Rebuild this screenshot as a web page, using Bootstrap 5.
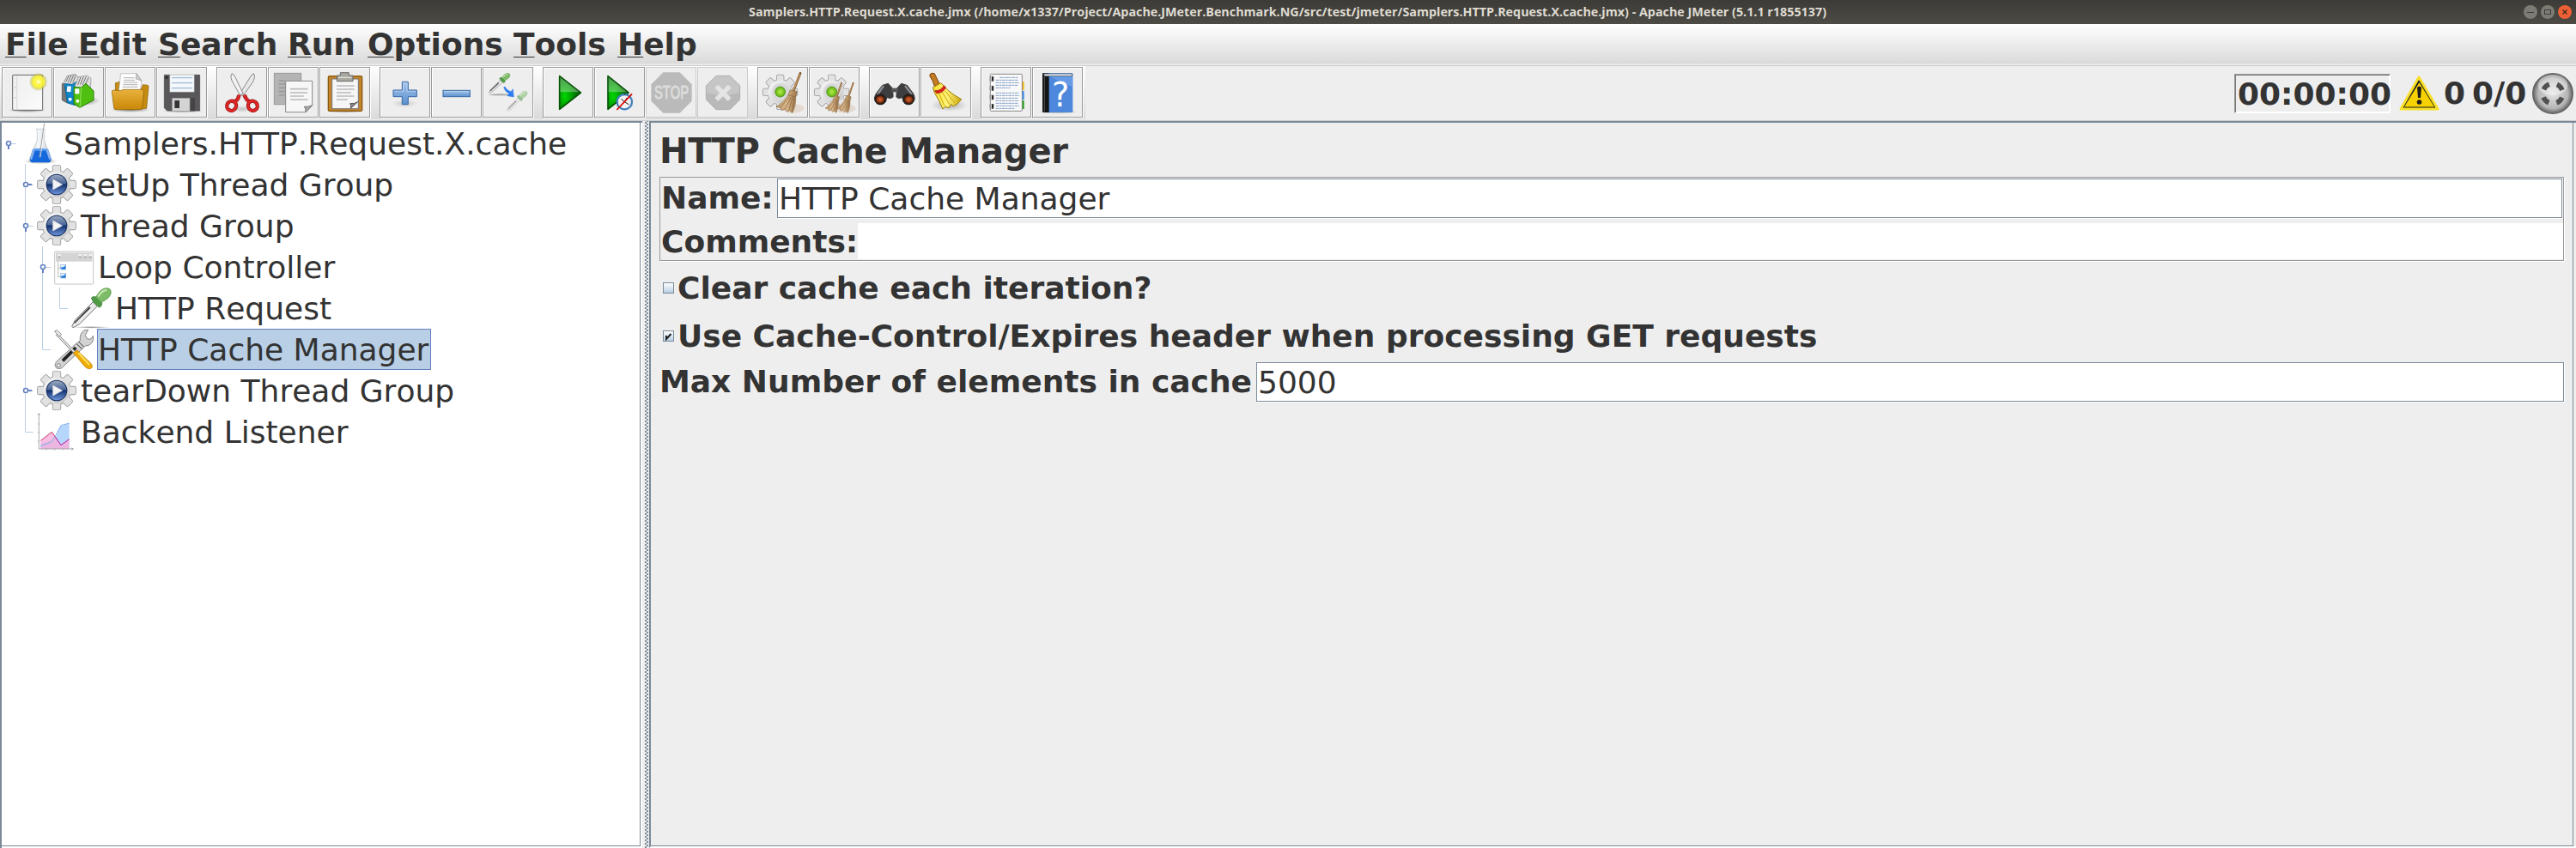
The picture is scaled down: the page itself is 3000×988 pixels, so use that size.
<!DOCTYPE html>
<html lang="en">
<head>
<meta charset="utf-8">
<title>Apache JMeter</title>
<link rel="stylesheet" href="https://cdn.jsdelivr.net/npm/bootstrap@5.3.0/dist/css/bootstrap.min.css">
<script src="https://cdn.jsdelivr.net/npm/bootstrap@5.3.0/dist/js/bootstrap.bundle.min.js"></script>
<style>
body{font-family:"DejaVu Sans",sans-serif;font-size:36px;line-height:48px;color:#333;background:#eee;overflow:hidden;height:988px;font-kerning:none}
.titlebar{height:28px;background:linear-gradient(#3c3b37,#4d4b44);color:#dfdbd2;position:relative}
.titlebar .cap{font:700 13.5px/28px "Open Sans",sans-serif;white-space:nowrap;width:1258px;margin-left:871px}
.winbtns{position:absolute;right:5px;top:6px;gap:4px}
.winbtns svg{display:block}
.menubar{height:49px;background:linear-gradient(#fff,#dadada 46px,#eee 47px,#eee 48px,#ccc 48px);font-weight:700;padding-left:6px}
.menubar a{color:#333;text-decoration:none;line-height:46px;padding-top:1px;white-space:nowrap;height:49px}
.menubar u{text-decoration-thickness:1px;text-underline-offset:2px;text-decoration-skip-ink:none}
.toolrow{height:64px;border-bottom:1px solid #ccc}
.tools{width:1264px;height:62px;background:linear-gradient(#fff,#dadada);padding:1px 0 0 2px;gap:1px}
.tb{width:59px;height:59px;padding:0;border:1px solid #999;border-radius:0;background:#eee;box-shadow:inset 1px 1px #fff,1px 1px #fff;display:block;flex:none}
.tb svg{display:block;margin:-1px}
.tb.off{border-color:#ccc;box-shadow:none}
.gap10{margin-right:10px}
.status{font-weight:700;height:63px}
.timer{width:182px;height:46px;line-height:46px;border:1px solid;border-color:#999 #fff #fff #999;box-shadow:inset 1px 1px #777,inset -1px -1px #fff;padding-left:3px;margin-top:9px;white-space:nowrap;letter-spacing:-.4px}
.tree{width:748px;height:847px;border:2px solid #7a8a99;border-right:0;border-bottom:0;background:#fff;position:relative}
.tree .frame{position:absolute;left:0;top:0;width:744px;height:843px;border-right:1px solid #7a8a99;border-bottom:1px solid #7a8a99}
.tree .lines{position:absolute;left:-2px;top:0}
.node{height:48px;white-space:nowrap}
.node .ic{width:48px;height:48px;flex:none;overflow:visible}
.node span{padding-left:3px;height:48px;line-height:49px}
.l0{padding-left:21px}.l1{padding-left:41px}.l2{padding-left:61px}.l3{padding-left:81px}
.node .sel{background:#b8cfe5;border:1px solid #6382bf;padding:0;margin-left:2px;width:389px;line-height:47px}
.divider{width:8px;background-color:#eee;background-image:radial-gradient(circle at 1px 1px,#7a8a99 .8px,transparent .9px),radial-gradient(circle at 1px 1px,#7a8a99 .8px,transparent .9px);background-size:8px 4px;background-position:3px 1px,5px 3px}
.panel{width:2244px;height:847px;border-left:2px solid #7a8a99;border-top:2px solid #7a8a99;border-bottom:2px solid #fff;position:relative;box-shadow:inset -3px 0 #eee,inset -4px 0 #7a8a99,inset 0 -1px #7a8a99;padding:0 14px 0 10px;white-space:nowrap}
.head{font-size:40px;font-weight:700;height:63px;line-height:67px;letter-spacing:-.15px}
.group{height:98px;border:1px solid #999;box-shadow:1px 1px #fff;font-weight:700;padding:1px}
.fld{background:#fff;border:1px solid #7a8a99;box-shadow:1px 1px #fff;height:46px;line-height:46px;font-weight:400;padding-left:1px;flex:1}
.lab{line-height:46px}
.opt{font-weight:700;height:56px}
.box{width:13px;height:13px;border:1px solid #7a8a99;background:linear-gradient(#fff,#b8cfe5);margin:0 4px 0 4px;flex:none}
.box svg{display:block}
</style>
</head>
<body>
<svg width="0" height="0" class="position-absolute">
<defs>
<linearGradient id="metal" x1="0" y1="0" x2="1" y2="1"><stop offset="0" stop-color="#fafafa"/><stop offset="1" stop-color="#c4c4c4"/></linearGradient>
<linearGradient id="page" x1="0" y1="0" x2="1" y2="1"><stop offset="0" stop-color="#eee"/><stop offset="1" stop-color="#fbfbfb"/></linearGradient>
<radialGradient id="glow"><stop offset="0" stop-color="#fffff0"/><stop offset=".3" stop-color="#fdf84a"/><stop offset=".65" stop-color="#f4ec30" stop-opacity=".9"/><stop offset="1" stop-color="#888830" stop-opacity="0"/></radialGradient>
<linearGradient id="gold" x1="0" y1="0" x2="0" y2="1"><stop offset="0" stop-color="#e9b23e"/><stop offset="1" stop-color="#c98706"/></linearGradient>
<radialGradient id="playg" cx=".25" cy=".6" r=".7"><stop offset="0" stop-color="#00d800"/><stop offset="1" stop-color="#005800"/></radialGradient>
<linearGradient id="blue" x1="0" y1="0" x2="0" y2="1"><stop offset="0" stop-color="#a8c6ea"/><stop offset="1" stop-color="#5b90cf"/></linearGradient>
<radialGradient id="orb"><stop offset="0" stop-color="#b5f04a"/><stop offset="1" stop-color="#5cb010"/></radialGradient>
<radialGradient id="lens"><stop offset="0" stop-color="#d9683a"/><stop offset=".6" stop-color="#963a12"/><stop offset="1" stop-color="#2a1208"/></radialGradient>
<linearGradient id="straw" x1="0" y1="0" x2="1" y2="0"><stop offset="0" stop-color="#c09a6c"/><stop offset=".5" stop-color="#d9b88c"/><stop offset="1" stop-color="#9b7448"/></linearGradient>
<linearGradient id="yel" x1="0" y1="0" x2="1" y2="0"><stop offset="0" stop-color="#f7e030"/><stop offset=".5" stop-color="#fff27a"/><stop offset="1" stop-color="#c9a608"/></linearGradient>
<linearGradient id="navy" x1="0" y1="0" x2="0" y2="1"><stop offset="0" stop-color="#9aa7bf"/><stop offset=".45" stop-color="#4a6698"/><stop offset=".5" stop-color="#12306a"/><stop offset="1" stop-color="#6d95dc"/></linearGradient>
<radialGradient id="shade"><stop offset="0" stop-color="#000" stop-opacity=".45"/><stop offset="1" stop-color="#000" stop-opacity="0"/></radialGradient>
<radialGradient id="ball" cx=".5" cy=".5"><stop offset="0" stop-color="#e4e4e4"/><stop offset=".75" stop-color="#b5b5b5"/><stop offset="1" stop-color="#606060"/></radialGradient>
<linearGradient id="glass" x1="0" y1="0" x2="1" y2="0"><stop offset="0" stop-color="#c3cad1"/><stop offset=".4" stop-color="#f6f8fa"/><stop offset="1" stop-color="#c9d0d6"/></linearGradient>
<g id="teeth"><circle r="48"/><rect x="-13" y="-66" width="26" height="132" rx="4"/><rect x="-13" y="-66" width="26" height="132" rx="4" transform="rotate(45)"/><rect x="-13" y="-66" width="26" height="132" rx="4" transform="rotate(90)"/><rect x="-13" y="-66" width="26" height="132" rx="4" transform="rotate(135)"/></g>
<g id="gear"><use href="#teeth" fill="#999" stroke="#999" stroke-width="5"/><use href="#teeth" fill="#e2e2e2"/><circle r="46" fill="url(#metal)"/></g>
<g id="besom"><path d="M150 22 L126 85" stroke="#7a5128" stroke-width="8" stroke-linecap="round"/><path d="M149 24 L126 83" stroke="#c99a62" stroke-width="4"/><path d="M115 80 L139 86 L134 105 C134 130 130 145 122 161 L112 152 L104 157 L97 147 L85 152 L82 143 L66 139 C90 125 100 110 107 98Z" fill="url(#straw)" stroke="#8b673e" stroke-width="2"/><path d="M108 98 L134 105 M112 104 L80 142 M118 106 L96 147 M124 106 L110 152 M130 108 L121 155" stroke="#7d552e" stroke-width="2" fill="none"/></g>
<g id="dropper"><path d="M4 136 L16 113 L78 50 L93 65 L31 128 L8 140Z" fill="#e8e8e8" stroke="#777" stroke-width="3"/><path d="M14 126 L68 70" stroke="#444" stroke-width="9"/><path d="M12 131 L72 73" stroke="#fff" stroke-width="4"/><path d="M72 36 C82 28 90 33 95 38 L107 50 C112 57 108 64 101 70 Q95 67 85 57 T72 36Z" fill="#4f9a45" stroke="#387532" stroke-width="2"/><path d="M88 34 C100 10 112 2 127 2 C140 2 144 15 138 27 C130 42 115 46 107 53Z" fill="#7dbb68" stroke="#4c8c40" stroke-width="2"/><path d="M96 32 C104 18 114 9 126 9" stroke="#bfe3a8" stroke-width="7" fill="none"/></g>
<g id="pin"><circle r="2.500" fill="#fff" stroke="#6382bf" stroke-width="1.600"/><path d="M3 0H7" stroke="#6382bf" stroke-width="2"/></g>
<g id="playgear"><g transform="translate(75 72)"><use href="#gear"/><circle r="37" fill="#162f62"/><circle r="34" fill="url(#navy)"/><path d="M-13 -18 L20 0 L-13 18Z" fill="#f4f4f4" stroke="#d8d8e0" stroke-width="2"/></g></g>
</defs>
</svg>

<header class="titlebar">
  <div class="cap"><svg class="d-block" width="1258" height="28"><text x="1" y="19" textLength="1255" lengthAdjust="spacingAndGlyphs" fill="#dfdbd2">Samplers.HTTP.Request.X.cache.jmx (/home/x1337/Project/Apache.JMeter.Benchmark.NG/src/test/jmeter/Samplers.HTTP.Request.X.cache.jmx) - Apache JMeter (5.1.1 r1855137)</text></svg></div>
  <div class="winbtns d-flex">
    <svg width="16" height="16"><circle cx="8" cy="8" r="8" fill="#7c7b74"/><path d="M4 8.500H12" stroke="#3c3b37"/></svg>
    <svg width="16" height="16"><circle cx="8" cy="8" r="8" fill="#7c7b74"/><rect x="4.500" y="5.500" width="7" height="5" fill="none" stroke="#3c3b37"/></svg>
    <svg width="16" height="16"><circle cx="8" cy="8" r="8" fill="#ee5f34"/><path d="M5.500 5.500l5 5m0-5l-5 5" stroke="#3c2b20" stroke-width="1.300"/></svg>
  </div>
</header>

<nav class="menubar d-flex">
  <a style="width:85px"><u>F</u>ile</a><a style="width:93px"><u>E</u>dit</a><a style="width:151px"><u>S</u>earch</a><a style="width:93px"><u>R</u>un</a><a style="width:170px"><u>O</u>ptions</a><a style="width:121px"><u>T</u>ools</a><a><u>H</u>elp</a>
</nav>

<div class="toolrow d-flex justify-content-between">
  <div class="tools d-flex">
    <button class="tb"><svg width="59" height="59" viewBox="0 0 177 177"><ellipse cx="90" cy="151" rx="66" ry="9" fill="url(#shade)"/><rect x="38" y="28" width="105" height="123" rx="2" fill="url(#page)" stroke="#666" stroke-width="3"/><path d="M53 32V148" stroke="#ccc" stroke-width="2"/><circle cx="47" cy="72" r="2" fill="#aaa"/><circle cx="47" cy="107" r="2" fill="#aaa"/><circle cx="128" cy="52" r="32" fill="url(#glow)"/></svg></button>
    <button class="tb"><svg width="59" height="59" viewBox="0 0 177 177"><ellipse cx="105" cy="118" rx="58" ry="18" fill="url(#shade)"/><path d="M31 58L49 62V126L31 116Z" fill="#777" stroke="#444" stroke-width="2"/><path d="M36 55L48 32 76 25 90 38 94 72 40 70Z" fill="#ddd" stroke="#777" stroke-width="2"/><path d="M44 52L55 30M52 54L63 29M60 56L71 28M68 56L79 28" stroke="#777" stroke-width="3"/><path d="M39 58L66 61 84 50 94 66 94 120 76 134 49 126Z" fill="#0d84c6" stroke="#075484" stroke-width="2"/><path d="M66 61L76 134 72 78Z" fill="#2aa9e8"/><rect x="48" y="67" width="14" height="20" fill="#f5f5f5" transform="rotate(5 55 77)"/><circle cx="59" cy="113" r="6" fill="#fff"/><path d="M75 68L88 35 118 30 132 40 130 75 90 82Z" fill="#ddd" stroke="#888" stroke-width="2"/><path d="M86 62L96 36M94 62L106 34M102 63L115 34M110 65L123 38" stroke="#777" stroke-width="3"/><path d="M72 70L98 72 114 58 141 84 141 116 93 142 72 129Z" fill="#4fc010" stroke="#267a04" stroke-width="3"/><path d="M98 72L93 142" stroke="#9be36a" stroke-width="3"/><rect x="76" y="76" width="15" height="18" fill="#fff"/><circle cx="85" cy="119" r="6" fill="#fff"/></svg></button>
    <button class="tb"><svg width="59" height="59" viewBox="0 0 177 177"><ellipse cx="90" cy="150" rx="70" ry="9" fill="url(#shade)"/><path d="M37 56L52 52 65 75H128L133 62 151 64 153 70 146 145 120 148 38 130Z" fill="#c48a12" stroke="#8b5d00" stroke-width="2"/><path d="M56 23H111L129 49 124 85H49Z" fill="#fdfdfd" stroke="#aaa" stroke-width="2"/><path d="M111 23L108 41 129 49Z" fill="#ccc" stroke="#999" stroke-width="2"/><path d="M66 38H103M66 46H105M65 54H115M64 62H115M62 70H115" stroke="#888" stroke-width="2"/><path d="M25 88Q24 81 32 81L55 83 64 79H130Q137 79 136 87L131 144Q130 149 124 149H40Q33 149 32 144Z" fill="url(#gold)" stroke="#8b5d00" stroke-width="2"/></svg></button>
    <button class="tb gap10"><svg width="59" height="59" viewBox="0 0 177 177"><ellipse cx="92" cy="153" rx="70" ry="8" fill="url(#shade)"/><path d="M28 28H152V153H38L28 143Z" fill="#595759" stroke="#424042" stroke-width="2"/><rect x="48" y="28" width="84" height="59" fill="#f4f8fc" stroke="#ddd" stroke-width="2"/><path d="M54 38H126M54 56H126M54 74H126" stroke="#8ba9cc" stroke-width="3"/><rect x="55" y="109" width="80" height="45" fill="#454345"/><rect x="56" y="109" width="61" height="45" fill="#d4d4d4" stroke="#aaa" stroke-width="2"/><rect x="64" y="117" width="17" height="27" fill="#333"/><rect x="32" y="33" width="8" height="8" fill="#222"/></svg></button>

    <button class="tb"><svg width="59" height="59" viewBox="0 0 177 177"><ellipse cx="90" cy="147" rx="40" ry="12" fill="url(#shade)" opacity=".4"/><path d="M130 23Q138 35 126 55L92 102 82 94 118 36Q124 24 130 23Z" fill="#e8e8e8" stroke="#888" stroke-width="3"/><path d="M54 23Q46 35 58 55L82 98 94 94 66 36Q60 24 54 23Z" fill="#f2f2f2" stroke="#888" stroke-width="3"/><g fill="none" stroke="#8f1010" stroke-width="13"><ellipse cx="53" cy="136" rx="16" ry="17" transform="rotate(30 53 136)"/><ellipse cx="127" cy="136" rx="16" ry="17" transform="rotate(-30 127 136)"/><path d="M66 121Q78 112 79 98M114 121Q102 112 98 98"/></g><g fill="none" stroke="#de2626" stroke-width="9"><ellipse cx="53" cy="136" rx="16" ry="17" transform="rotate(30 53 136)"/><ellipse cx="127" cy="136" rx="16" ry="17" transform="rotate(-30 127 136)"/><path d="M66 121Q78 112 79 98M114 121Q102 112 98 98"/></g></svg></button>
    <button class="tb"><svg width="59" height="59" viewBox="0 0 177 177"><rect x="22" y="22" width="94" height="109" fill="#b4b4b4" stroke="#999" stroke-width="3"/><path d="M38 48H60M38 60H60M38 73H60M38 86H60M38 99H60" stroke="#999" stroke-width="5"/><path d="M62 49H155V134L132 158H62Z" fill="#f7f7f7" stroke="#888" stroke-width="3"/><path d="M78 77H140M78 90H138M78 102H125M78 114H140" stroke="#bbb" stroke-width="5"/><path d="M155 134L132 158Q133 145 127 139Q142 140 155 134Z" fill="#aaa" stroke="#777" stroke-width="3"/></svg></button>
    <button class="tb gap10"><svg width="59" height="59" viewBox="0 0 177 177"><ellipse cx="90" cy="154" rx="66" ry="7" fill="url(#shade)"/><rect x="31" y="32" width="118" height="122" rx="4" fill="#c2842a" stroke="#8a5810" stroke-width="4"/><rect x="44" y="42" width="92" height="104" fill="#f6f6f6" stroke="#777" stroke-width="3"/><path d="M60 66H122M60 78H122M60 90H110M60 102H122M60 114H98" stroke="#bbb" stroke-width="5"/><path d="M134 122L110 144Q111 132 107 128Q122 130 134 122Z" fill="#888" stroke="#555" stroke-width="3"/><path d="M61 30H73V20H103V30H117V50H61Z" fill="#aaa9a0" stroke="#666" stroke-width="3"/><path d="M66 37H112" stroke="#ddd" stroke-width="4"/></svg></button>

    <button class="tb"><svg width="59" height="59" viewBox="0 0 177 177"><ellipse cx="88" cy="128" rx="46" ry="14" fill="url(#shade)" opacity=".35"/><path d="M79 52H100V81H130V104H100V131H79V104H48V81H79Z" fill="url(#blue)" stroke="#3667a5" stroke-width="3"/><path d="M83 56H96V85H126M52 85H83V56" stroke="#c4daf3" stroke-width="2" fill="none"/></svg></button>
    <button class="tb"><svg width="59" height="59" viewBox="0 0 177 177"><rect x="42" y="82" width="94" height="22" fill="url(#blue)" stroke="#3667a5" stroke-width="3"/><path d="M46 86H132" stroke="#c4daf3" stroke-width="2"/></svg></button>
    <button class="tb gap10"><svg width="59" height="59" viewBox="0 0 177 177"><ellipse cx="62" cy="97" rx="40" ry="3" fill="#888" opacity=".7"/><use href="#dropper" transform="translate(20 21) scale(.54 .5)"/><use href="#dropper" transform="translate(83 84) scale(.52 .5)" opacity=".55"/><path d="M74 70Q78 88 93 93L86 101 109 105 106 77 99 86Q84 82 79 70Z" fill="#2f7df6" stroke="#1565e0" stroke-width="1"/></svg></button>

    <button class="tb"><svg width="59" height="59" viewBox="0 0 177 177"><path d="M59 32L133 90 59 148Z" fill="url(#playg)" stroke="#045204" stroke-width="5" stroke-linejoin="round"/><path d="M61 36L128 88H61Z" fill="#fff" opacity=".3"/></svg></button>
    <button class="tb"><svg width="59" height="59" viewBox="0 0 177 177"><path d="M48 32L120 90 48 148Z" fill="url(#playg)" stroke="#045204" stroke-width="5" stroke-linejoin="round"/><path d="M50 36L114 88H50Z" fill="#fff" opacity=".3"/><circle cx="106" cy="122" r="26" fill="#f2f2f2" stroke="#4380bd" stroke-width="7"/><path d="M106 92v6M94 112L106 122 122 132M106 122L114 108" stroke="#333" stroke-width="3"/><path d="M79 150L132 94" stroke="#e00000" stroke-width="5"/></svg></button>
    <button class="tb off"><svg width="59" height="59" viewBox="0 0 177 177" class="overflow-visible"><path d="M61 19H119L161 61V119L119 161H61L19 119V61Z" fill="#bababa"/><text x="30" y="112" font-family="Liberation Sans,sans-serif" font-size="64" fill="#dcdcdc" stroke="#dcdcdc" stroke-width="3" textLength="120" lengthAdjust="spacingAndGlyphs">STOP</text></svg></button>
    <button class="tb off gap10"><svg width="59" height="59" viewBox="0 0 177 177"><path d="M66 31H114L149 66V114L114 149H66L31 114V66Z" fill="#b9b9b9" stroke="#b0b0b0" stroke-width="3"/><path d="M66 33H114L147 66V90Q90 105 33 90V66Z" fill="#c6c6c6"/><path d="M62 68L108 114M108 68L62 114" transform="translate(5 0)" stroke="#e4e4e4" stroke-width="16"/></svg></button>

    <button class="tb"><svg width="59" height="59" viewBox="0 0 177 177"><ellipse cx="125" cy="145" rx="38" ry="16" fill="#c9a080" opacity=".25"/><use href="#gear" transform="translate(80 88) scale(.9)"/><circle cx="80" cy="87" r="30" fill="#d8d8d8"/><circle cx="80" cy="87" r="18" fill="url(#orb)" stroke="#448010" stroke-width="2"/><use href="#besom"/></svg></button>
    <button class="tb gap10"><svg width="59" height="59" viewBox="0 0 177 177"><ellipse cx="125" cy="145" rx="38" ry="16" fill="#c9a080" opacity=".25"/><use href="#gear" transform="translate(80 88) scale(.9)"/><circle cx="80" cy="87" r="30" fill="#d8d8d8"/><circle cx="80" cy="87" r="18" fill="url(#orb)" stroke="#448010" stroke-width="2"/><use href="#besom" transform="translate(12 40) scale(.68 .75)"/><use href="#besom" transform="translate(53 40) scale(.68 .75)"/></svg></button>

    <button class="tb"><svg width="59" height="59" viewBox="0 0 177 177"><path d="M46 63L67 56 84 75 86 104Q77 116 64 108L60 122Q40 142 20 120Q14 108 24 92Z" fill="#3e3e40"/><path d="M134 63L113 56 96 75 94 104Q102 116 115 108L119 122Q140 142 158 120Q165 108 156 92Z" fill="#3e3e40"/><path d="M78 74H102V88H78Z" fill="#555"/><path d="M51 66L30 96M126 66L150 96" stroke="#8c8c90" stroke-width="7"/><circle cx="40" cy="113" r="20" fill="#222"/><circle cx="138" cy="113" r="20" fill="#222"/><ellipse cx="39" cy="114" rx="17" ry="15" fill="url(#lens)"/><ellipse cx="139" cy="114" rx="17" ry="15" fill="url(#lens)"/></svg></button>
    <button class="tb gap10"><svg width="59" height="59" viewBox="0 0 177 177"><ellipse cx="100" cy="134" rx="64" ry="22" fill="url(#shade)" opacity=".6"/><path d="M33 26Q38 19 49 23Q58 42 67 61L49 68Q44 47 33 33Z" fill="#c27b22" stroke="#7a4408" stroke-width="3"/><path d="M43 72L71 56 82 66 96 82Q120 101 143 113Q129 133 115 137L106 131 100 143 85 139 78 147Q64 113 50 92Z" fill="url(#yel)" stroke="#9b7c00" stroke-width="3"/><path d="M65 93L83 135M76 88L101 130M86 84L119 125" stroke="#c9a608" stroke-width="3"/><path d="M50 83Q72 84 82 65L88 72Q80 91 56 92Z" fill="#e02020" stroke="#9b0808" stroke-width="2"/></svg></button>

    <button class="tb"><svg width="59" height="59" viewBox="0 0 177 177"><rect x="134" y="51" width="18" height="30" fill="#f8b81a"/><rect x="134" y="84" width="18" height="30" fill="#3c8df5"/><rect x="134" y="117" width="18" height="30" fill="#24a11c"/><rect x="34" y="25" width="111" height="129" rx="3" fill="#f9f9f9" stroke="#888" stroke-width="3"/><path d="M66 37H132M53 46H132M53 55H135M53 64H132M53 73H104M53 91H134M53 100H135M53 109H132M53 118H134M53 127H132M53 136H135M53 145H120" stroke="#7d9ac4" stroke-width="3" stroke-dasharray="11 2 7 2"/><path d="M42 33v17M42 66v17M42 98v17M42 129v17" stroke="#222" stroke-width="7"/><path d="M42 34H32v14h10M42 67H32v14h10M42 99H32v14h10M42 130H32v14h10" stroke="#999" stroke-width="2" fill="none"/></svg></button>
    <button class="tb"><svg width="59" height="59" viewBox="0 0 177 177"><ellipse cx="90" cy="157" rx="72" ry="6" fill="url(#shade)"/><rect x="36" y="22" width="106" height="137" rx="3" fill="#4d88dc"/><path d="M60 33L142 70V33Z" fill="#78a8ec" opacity=".6"/><path d="M36 22H59V159H40Q36 158 36 154Z" fill="#151515"/><path d="M43 28V156" stroke="#555" stroke-width="3"/><path d="M40 24H140V32H44Z" fill="#e4e8ee" stroke="#345" stroke-width="2"/><text x="69" y="139" font-family="DejaVu Sans,sans-serif" font-size="116" fill="#fff" textLength="61" lengthAdjust="spacingAndGlyphs">?</text></svg></button>
  </div>
  <div class="status d-flex">
    <div class="timer" style="letter-spacing:0">00:00:00</div>
    <svg width="48" height="44" style="margin:10px 0 0 9px"><path d="M24 3L46 40H3Z" fill="#1d1d1b" stroke="#f8e02a" stroke-width="3" stroke-linejoin="round"/><path d="M24.500 9L42 37.500H7Z" fill="#f8d200"/><path d="M22 15q2.500-3 5 0l-1 12h-3Z" fill="#1d1d1b"/><circle cx="24.500" cy="32" r="2.800" fill="#1d1d1b"/></svg>
    <span style="line-height:64px;margin-left:5px;width:33px">0</span><span style="line-height:64px;width:68px">0/0</span>
    <svg width="48" height="48" viewBox="0 0 144 144" style="margin:8px 3px 0 2px"><circle cx="72" cy="72" r="70" fill="url(#ball)" stroke="#666" stroke-width="4"/><ellipse cx="72" cy="42" rx="52" ry="36" fill="#fff" opacity=".4"/><circle cx="72" cy="72" r="35" fill="none" stroke="#505050" stroke-width="17" stroke-dasharray="27 27.980" stroke-dashoffset="-14"/></svg>
  </div>
</div>

<main class="d-flex">
  <div class="tree">
    <svg class="lines" width="100" height="400" fill="none"><path d="M10 24.500H19M29.500 48V360.500H39M29.500 72.500H39M29.500 120.500H39M29.500 312.500H39M49.500 144V264.500H59M49.500 168.500H59M69.500 192V216.500H79" stroke="#b8cfe5"/><use href="#pin" transform="translate(10 24) rotate(90)"/><use href="#pin" transform="translate(30 72)"/><use href="#pin" transform="translate(30 120) rotate(90)"/><use href="#pin" transform="translate(50 168) rotate(90)"/><use href="#pin" transform="translate(30 312)"/></svg>
    <div class="frame"></div>
    <div class="node d-flex l0"><svg class="ic" viewBox="-2 0 144 144"><ellipse cx="71" cy="135" rx="60" ry="9" fill="url(#shade)"/><path d="M56 22H87L84 28V62L108 126Q109 139 98 140H43Q30 139 32 126L59 62V28Z" fill="url(#glass)" stroke="#b4bcc4" stroke-width="2"/><path d="M43 93H97L108 126Q108 138 98 139H43Q32 138 34 126Z" fill="#1468dc"/><path d="M43 93H52L40 130 34 126ZM97 93H88L101 130 108 126Z" fill="#8cb2ea"/><ellipse cx="70" cy="94" rx="27" ry="5" fill="#5b9cf2"/><path d="M84 2L67 121" stroke="#999" stroke-width="3"/><path d="M87 2L70 121" stroke="#fff" stroke-width="2"/></svg><span>Samplers.HTTP.Request.X.cache</span></div>
    <div class="node d-flex l1"><svg class="ic" viewBox="6 0 144 144"><use href="#playgear" /></svg><span>setUp Thread Group</span></div>
    <div class="node d-flex l1"><svg class="ic" viewBox="6 0 144 144"><use href="#playgear"/></svg><span>Thread Group</span></div>
    <div class="node d-flex l2"><svg class="ic" viewBox="0 0 144 144"><rect x="2" y="18" width="135" height="114" rx="3" fill="#fff" stroke="#c4c4c4" stroke-width="3"/><rect x="6" y="22" width="127" height="31" fill="#d4d4d4"/><path d="M12 28h12v5H12ZM85 28h12v5H85ZM103 28h12v5h-12ZM121 28h12v5h-12Z" fill="#f4f4f4"/><path d="M12 36h12l-6 6ZM85 36h12l-6 6ZM103 36h12l-6 6ZM121 36h12l-6 6Z" fill="#aaa"/><path d="M14 53V107H24M14 76H24" stroke="#999" stroke-width="2" fill="none"/><g fill="#eaf3fc" stroke="#8ab3dd" stroke-width="2"><rect x="23" y="64" width="18" height="17"/><rect x="23" y="94" width="18" height="17"/></g><path d="M25 72Q33 76 40 66V80H25ZM25 102Q33 106 40 96V110H25Z" fill="#1f76dc"/></svg><span>Loop Controller</span></div>
    <div class="node d-flex l3"><svg class="ic" viewBox="0 0 144 144"><ellipse cx="70" cy="139" rx="67" ry="4" fill="url(#shade)"/><use href="#dropper" transform="translate(-2 0)"/></svg><span>HTTP Request</span></div>
    <div class="node d-flex l2"><svg class="ic" viewBox="0 0 144 144"><path d="M91 42Q88 16 106 5L119 4 109 22 115 35 127 37 136 25Q141 47 121 58L109 60 34 130Q24 144 9 138Q-2 129 8 115L76 53Z" fill="#d3d3d3" stroke="#888" stroke-width="3"/><path d="M76 66L30 112" stroke="#222" stroke-width="11"/><path d="M78 53L98 70M86 46L104 63" stroke="#333" stroke-width="3"/><circle cx="16" cy="128" r="6" fill="#fff" stroke="#777" stroke-width="3"/><path d="M8 18L71 82" stroke="#888" stroke-width="9"/><path d="M8 18L71 82" stroke="#eee" stroke-width="4"/><path d="M2 9L10 5 26 20 18 27Z" fill="#eee" stroke="#888" stroke-width="3"/><path d="M67 87Q73 76 83 76L91 86 124 116Q139 131 130 138Q119 145 105 130L78 97Z" fill="#efaa05" stroke="#ad7400" stroke-width="2"/><path d="M85 85L123 126" stroke="#ffe057" stroke-width="6"/></svg><span class="sel">HTTP Cache Manager</span></div>
    <div class="node d-flex l1"><svg class="ic" viewBox="6 0 144 144"><use href="#playgear"/></svg><span>tearDown Thread Group</span></div>
    <div class="node d-flex l1"><svg class="ic" viewBox="0 0 144 144"><path d="M13 112L46 104 65 93 82 53 113 42V132H13Z" fill="#b7d6fb"/><path d="M13 103L52 73 84 119 113 98V132H13Z" fill="#f8aeda" opacity=".8"/><path d="M13 122L50 108 67 83 84 50 113 42" stroke="#7baff2" stroke-width="3" fill="none"/><path d="M13 103L52 73 68 96" stroke="#bd3d69" stroke-width="3" fill="none"/><path d="M66 93L84 119 113 98" stroke="#b914a5" stroke-width="3" fill="none"/><path d="M7 8V132H127M4 14L7 8L10 14M121 129L127 132L121 135M3 45H7M3 75H7M3 105H7M32 132V136M62 132V136M92 132V136" stroke="#999" stroke-width="2.500" fill="none"/></svg><span>Backend Listener</span></div>
  </div>
  <div class="divider"></div>
  <section class="panel">
    <div class="head">HTTP Cache Manager</div>
    <div class="group">
      <div class="d-flex"><div class="lab" style="width:135px">Name:</div><div class="fld">HTTP Cache Manager</div></div>
      <div class="d-flex" style="padding-top:6px;margin-right:-1px"><div style="width:229px;line-height:43px">Comments:</div><div class="bg-white flex-fill" style="height:42px"></div></div>
    </div>
    <div class="opt d-flex align-items-center" style="margin-top:3px"><div class="box"></div><span style="padding-top:1px">Clear cache each iteration?</span></div>
    <div class="opt d-flex align-items-center"><div class="box"><svg width="11" height="11"><path d="M3 5V9L8.500 3" fill="none" stroke="#222" stroke-width="2"/></svg></div><span style="padding-top:1px">Use Cache-Control/Expires header when processing GET requests</span></div>
    <div class="d-flex fw-bold" style="margin-top:3px"><div style="width:695px;line-height:46px">Max Number of elements in cache</div><div class="fld">5000</div></div>
  </section>
</main>
</body>
</html>
